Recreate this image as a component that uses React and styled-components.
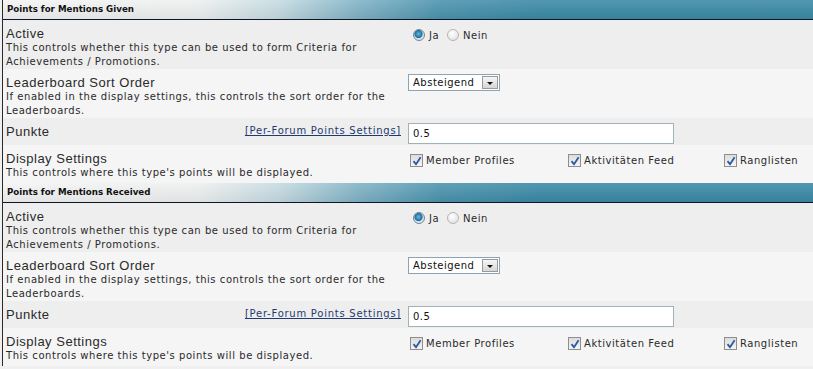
import React from 'react'
import styled, { createGlobalStyle } from 'styled-components'

const Global = createGlobalStyle`
  body {
    margin: 0;
    background: #f0f0f0;
    font-family: "DejaVu Sans", Verdana, sans-serif;
  }
`

const sections = [
  { title: 'Points for Mentions Given' },
  { title: 'Points for Mentions Received' },
]

function Radio({ checked, label }) {
  return (
    <RadioLabel>
      <RadioDot checked={checked} />
      {label}
    </RadioLabel>
  )
}

function Check({ label }) {
  return (
    <CheckLabel>
      <CheckBox>
        <svg width="10" height="10" viewBox="0 0 10 10">
          <path d="M1.5 5.2 L4 8.2 L8.6 1.2" fill="none" stroke="#2c5aa0" strokeWidth="1.8" />
        </svg>
      </CheckBox>
      {label}
    </CheckLabel>
  )
}

function Section({ title }) {
  return (
    <>
      <Header>{title}</Header>
      <Row tall>
        <Left>
          <Title>Active</Title>
          <Desc>This controls whether this type can be used to form Criteria for Achievements / Promotions.</Desc>
        </Left>
        <Right>
          <Radios>
            <Radio checked label="Ja" />
            <Radio label="Nein" />
          </Radios>
        </Right>
      </Row>
      <Row alt tall>
        <Left>
          <Title>Leaderboard Sort Order</Title>
          <Desc>If enabled in the display settings, this controls the sort order for the Leaderboards.</Desc>
        </Left>
        <Right>
          <Select>
            <span>Absteigend</span>
            <SelectButton />
          </Select>
        </Right>
      </Row>
      <Row>
        <Left inline>
          <Title>Punkte</Title>
          <Link href="#">[Per-Forum Points Settings]</Link>
        </Left>
        <Right>
          <Input defaultValue="0.5" />
        </Right>
      </Row>
      <Row alt>
        <Left>
          <Title>Display Settings</Title>
          <Desc>This controls where this type's points will be displayed.</Desc>
        </Left>
        <Right>
          <Checks>
            <Check label="Member Profiles" />
            <Check label="Aktivitäten Feed" />
            <Check label="Ranglisten" />
          </Checks>
        </Right>
      </Row>
    </>
  )
}

export default function App() {
  return (
    <Page>
      <Global />
      <Table>
        {sections.map(s => <Section key={s.title} title={s.title} />)}
      </Table>
    </Page>
  )
}

const Page = styled.div`
  padding-left: 2px;
  width: 811px;
  height: 369px;
  overflow: hidden;
`

const Table = styled.div`
  border-left: 1px solid #2a2a2a;
`

const Header = styled.div`
  height: 20px;
  box-sizing: border-box;
  padding: 4px 0 0 4px;
  font-size: 8.7px;
  font-weight: bold;
  color: #111;
  border-bottom: 1px solid #0b1726;
  background:
    linear-gradient(to bottom, rgba(255,255,255,0.12), rgba(0,0,0,0.06)),
    linear-gradient(to right, #f3f3f3 0%, #eef0f0 24%, #c5dbe2 34%, #7fb2c5 44%, #4a93ad 54%, #3a89a5 66%, #3a89a5 100%);
`

const Row = styled.div`
  display: grid;
  grid-template-columns: 400px 1fr;
  height: ${p => (p.tall ? '49px' : p.alt ? '38px' : '27px')};
  background: ${p => (p.alt ? '#f5f5f5' : '#eeeeee')};
`

const Left = styled.div`
  padding: ${p => (p.inline ? '6px 2px 0 3px' : '6px 6px 0 3px')};
  display: ${p => (p.inline ? 'flex' : 'block')};
  justify-content: space-between;
  align-items: flex-start;
`

const Title = styled.div`
  font-family: "Liberation Sans", Arial, sans-serif;
  font-size: 13px;
  letter-spacing: 0.5px;
  color: #2a2a2a;
  line-height: 15px;
`

const Desc = styled.div`
  font-size: 10px;
  letter-spacing: 0.55px;
  color: #2a2a2a;
  line-height: 13.5px;
`

const Link = styled.a`
  font-size: 10px;
  letter-spacing: 0.75px;
  color: #1f3a6e;
  text-decoration: underline;
  margin-top: 1px;
`

const Right = styled.div`
  display: flex;
  align-items: flex-start;
  padding: 4px 0 0 5px;
`

const Radios = styled.div`
  display: flex;
  gap: 8px;
  padding: 5px 0 0 5px;
`

const RadioLabel = styled.label`
  display: flex;
  align-items: center;
  gap: 4px;
  font-size: 10px;
  letter-spacing: 0.5px;
  color: #2a2a2a;
`

const RadioDot = styled.span`
  width: 10px;
  height: 10px;
  border-radius: 50%;
  border: 1px solid ${p => (p.checked ? '#6d8796' : '#b5b5b5')};
  background: ${p =>
    p.checked
      ? 'radial-gradient(circle at 45% 40%, #6fb6df 0%, #1c6ea0 45%, #cfdde6 55%, #f4f7f9 100%)'
      : 'radial-gradient(circle at 40% 35%, #ffffff 0%, #e6e6e6 70%, #d4d4d4 100%)'};
`

const Select = styled.div`
  display: flex;
  align-items: center;
  justify-content: space-between;
  width: 92px;
  height: 17px;
  box-sizing: border-box;
  border: 1px solid #8fa4b3;
  background: #fff;
  margin-top: 1px;
  padding-left: 4px;
  font-size: 10px;
  letter-spacing: 0.5px;
  color: #111;
`

const SelectButton = styled.span`
  width: 16px;
  height: 13px;
  margin-right: 1px;
  box-sizing: border-box;
  border: 1px solid #9a9a9a;
  background: linear-gradient(#f6f6f6, #d6d6d6);
  position: relative;
  &::after {
    content: "";
    position: absolute;
    left: 4px;
    top: 5px;
    border-left: 3px solid transparent;
    border-right: 3px solid transparent;
    border-top: 3px solid #111;
  }
`

const Input = styled.input`
  width: 266px;
  height: 21px;
  box-sizing: border-box;
  border: 1px solid #a2b1b9;
  background: #fff;
  margin-top: 1px;
  padding: 0 4px;
  font-family: "DejaVu Sans", Verdana, sans-serif;
  font-size: 10px;
  letter-spacing: 0.5px;
  color: #111;
  outline: none;
`

const Checks = styled.div`
  display: grid;
  grid-template-columns: 158px 156px 1fr;
  width: 100%;
  padding: 5px 0 0 2px;
`

const CheckLabel = styled.label`
  display: flex;
  align-items: center;
  gap: 3px;
  font-size: 10px;
  letter-spacing: 0.55px;
  color: #2a2a2a;
`

const CheckBox = styled.span`
  display: flex;
  align-items: center;
  justify-content: center;
  width: 13px;
  height: 13px;
  box-sizing: border-box;
  border: 1px solid #8e8e8e;
  background: linear-gradient(#dcdcdc, #f5f5f5);
`
